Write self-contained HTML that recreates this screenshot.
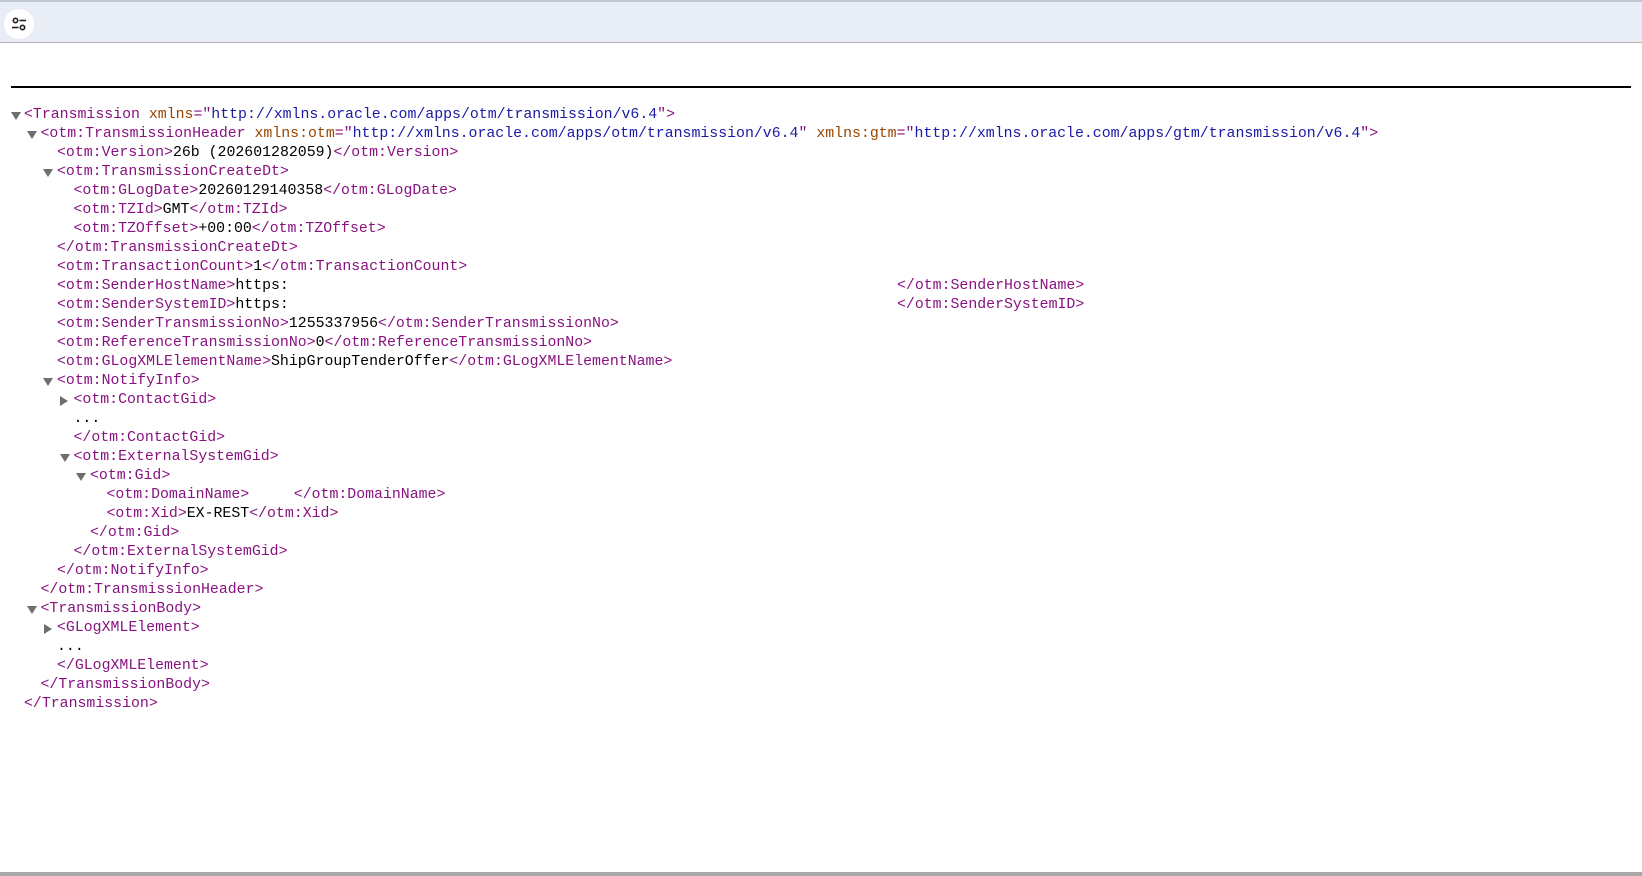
<!DOCTYPE html>
<html><head><meta charset="utf-8"><style>
html,body{margin:0;padding:0;width:1642px;height:876px;overflow:hidden;background:#fff;font-family:"Liberation Mono",monospace;}
.bar{position:absolute;left:0;top:0;width:1642px;height:43px;background:#e9eef6;border-top:2px solid #c4c9d1;border-bottom:1px solid #b4b4b4;box-sizing:border-box;}
.ic{position:absolute;left:4px;top:7px;width:30px;height:30px;border-radius:50%;background:#fff;}
.hr{position:absolute;left:11px;top:86px;width:1620px;height:2px;background:#000;}
.l{position:absolute;height:19px;line-height:19px;font-size:14.87px;white-space:pre;color:#000;}
.t{color:#881280}.a{color:#994500}.v{color:#1a1aa6}
.dn{position:absolute;width:0;height:0;border-left:5px solid transparent;border-right:5px solid transparent;border-top:8px solid #6e6e6e;}
.rt{position:absolute;width:0;height:0;border-top:5px solid transparent;border-bottom:5px solid transparent;border-left:8px solid #6e6e6e;}
.bot{position:absolute;left:0;top:872px;width:1642px;height:4px;background:#a8a8a8;}
</style></head><body>
<div class="bar"><div class="ic"><svg width="30" height="30" viewBox="0 0 30 30"><circle cx="11.5" cy="11.5" r="2.2" fill="none" stroke="#222" stroke-width="1.6"/><line x1="15.5" y1="11.5" x2="22" y2="11.5" stroke="#222" stroke-width="1.6"/><line x1="8" y1="18.5" x2="14.5" y2="18.5" stroke="#222" stroke-width="1.6"/><circle cx="18.5" cy="18.5" r="2.2" fill="none" stroke="#222" stroke-width="1.6"/></svg></div></div>
<div class="hr"></div>

<div class="dn" style="left:11px;top:112px"></div>
<div class="l" style="left:24px;top:106px"><span class="t">&lt;Transmission</span> <span class="a">xmlns</span><span class="t">="</span><span class="v">http://xmlns.oracle.com/apps/otm/transmission/v6.4</span><span class="t">"&gt;</span></div>
<div class="dn" style="left:27px;top:131px"></div>
<div class="l" style="left:40.5px;top:125px"><span class="t">&lt;otm:TransmissionHeader</span> <span class="a">xmlns:otm</span><span class="t">="</span><span class="v">http://xmlns.oracle.com/apps/otm/transmission/v6.4</span><span class="t">"</span> <span class="a">xmlns:gtm</span><span class="t">="</span><span class="v">http://xmlns.oracle.com/apps/gtm/transmission/v6.4</span><span class="t">"&gt;</span></div>
<div class="l" style="left:57px;top:144px"><span class="t">&lt;otm:Version&gt;</span>26b (202601282059)<span class="t">&lt;/otm:Version&gt;</span></div>
<div class="dn" style="left:43px;top:169px"></div>
<div class="l" style="left:57px;top:163px"><span class="t">&lt;otm:TransmissionCreateDt&gt;</span></div>
<div class="l" style="left:73.5px;top:182px"><span class="t">&lt;otm:GLogDate&gt;</span>20260129140358<span class="t">&lt;/otm:GLogDate&gt;</span></div>
<div class="l" style="left:73.5px;top:201px"><span class="t">&lt;otm:TZId&gt;</span>GMT<span class="t">&lt;/otm:TZId&gt;</span></div>
<div class="l" style="left:73.5px;top:220px"><span class="t">&lt;otm:TZOffset&gt;</span>+00:00<span class="t">&lt;/otm:TZOffset&gt;</span></div>
<div class="l" style="left:57px;top:239px"><span class="t">&lt;/otm:TransmissionCreateDt&gt;</span></div>
<div class="l" style="left:57px;top:258px"><span class="t">&lt;otm:TransactionCount&gt;</span>1<span class="t">&lt;/otm:TransactionCount&gt;</span></div>
<div class="l" style="left:57px;top:277px"><span class="t">&lt;otm:SenderHostName&gt;</span>https:</div>
<div class="l" style="left:897px;top:277px"><span class="t">&lt;/otm:SenderHostName&gt;</span></div>
<div class="l" style="left:57px;top:296px"><span class="t">&lt;otm:SenderSystemID&gt;</span>https:</div>
<div class="l" style="left:897px;top:296px"><span class="t">&lt;/otm:SenderSystemID&gt;</span></div>
<div class="l" style="left:57px;top:315px"><span class="t">&lt;otm:SenderTransmissionNo&gt;</span>1255337956<span class="t">&lt;/otm:SenderTransmissionNo&gt;</span></div>
<div class="l" style="left:57px;top:334px"><span class="t">&lt;otm:ReferenceTransmissionNo&gt;</span>0<span class="t">&lt;/otm:ReferenceTransmissionNo&gt;</span></div>
<div class="l" style="left:57px;top:353px"><span class="t">&lt;otm:GLogXMLElementName&gt;</span>ShipGroupTenderOffer<span class="t">&lt;/otm:GLogXMLElementName&gt;</span></div>
<div class="dn" style="left:43px;top:378px"></div>
<div class="l" style="left:57px;top:372px"><span class="t">&lt;otm:NotifyInfo&gt;</span></div>
<div class="rt" style="left:60px;top:396px"></div>
<div class="l" style="left:73.5px;top:391px"><span class="t">&lt;otm:ContactGid&gt;</span></div>
<div class="l" style="left:73.5px;top:410px">...</div>
<div class="l" style="left:73.5px;top:429px"><span class="t">&lt;/otm:ContactGid&gt;</span></div>
<div class="dn" style="left:59.5px;top:454px"></div>
<div class="l" style="left:73.5px;top:448px"><span class="t">&lt;otm:ExternalSystemGid&gt;</span></div>
<div class="dn" style="left:76px;top:473px"></div>
<div class="l" style="left:90px;top:467px"><span class="t">&lt;otm:Gid&gt;</span></div>
<div class="l" style="left:106.5px;top:486px"><span class="t">&lt;otm:DomainName&gt;</span>     <span class="t">&lt;/otm:DomainName&gt;</span></div>
<div class="l" style="left:106.5px;top:505px"><span class="t">&lt;otm:Xid&gt;</span>EX-REST<span class="t">&lt;/otm:Xid&gt;</span></div>
<div class="l" style="left:90px;top:524px"><span class="t">&lt;/otm:Gid&gt;</span></div>
<div class="l" style="left:73.5px;top:543px"><span class="t">&lt;/otm:ExternalSystemGid&gt;</span></div>
<div class="l" style="left:57px;top:562px"><span class="t">&lt;/otm:NotifyInfo&gt;</span></div>
<div class="l" style="left:40.5px;top:581px"><span class="t">&lt;/otm:TransmissionHeader&gt;</span></div>
<div class="dn" style="left:27px;top:606px"></div>
<div class="l" style="left:40.5px;top:600px"><span class="t">&lt;TransmissionBody&gt;</span></div>
<div class="rt" style="left:43.5px;top:624px"></div>
<div class="l" style="left:57px;top:619px"><span class="t">&lt;GLogXMLElement&gt;</span></div>
<div class="l" style="left:57px;top:638px">...</div>
<div class="l" style="left:57px;top:657px"><span class="t">&lt;/GLogXMLElement&gt;</span></div>
<div class="l" style="left:40.5px;top:676px"><span class="t">&lt;/TransmissionBody&gt;</span></div>
<div class="l" style="left:24px;top:695px"><span class="t">&lt;/Transmission&gt;</span></div>
<div class="bot"></div>
</body></html>
